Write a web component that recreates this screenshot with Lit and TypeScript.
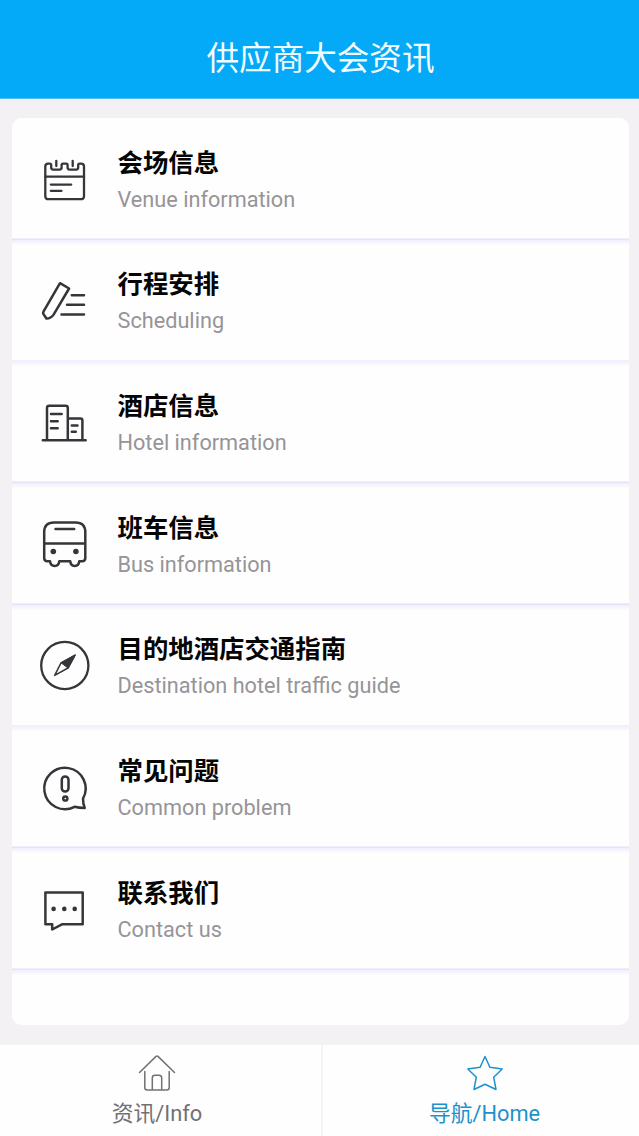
import { LitElement, html, css, svg } from "lit";
import { customElement } from "lit/decorators.js";

const icons = {
  venue: svg`<path d="M18.2 18.6Q15.3 18.6 15.3 21.5V51.2Q15.3 54.2 18.3 54.2H51Q54 54.2 54 51.2V21.5Q54 18.6 51 18.6H49.6Q48.2 18.6 48.2 20V22.6Q48.2 24.6 46.2 24.6H39.6Q37.6 24.6 37.6 22.6V20Q37.6 18.6 36.2 18.6H33Q31.6 18.6 31.6 20V22.6Q31.6 24.6 29.6 24.6H23.2Q21.2 24.6 21.2 22.6V20Q21.2 18.6 19.8 18.6Z" stroke-width="2.3"/><path d="M26.3 15.8V21M42.7 15.8V21M15.3 31.7H54M20.8 39.6H41.2M20.8 45.8H31.5" stroke-width="2.3"/>`,
  schedule: svg`<path d="M30 16.2L39.1 21.5L23.6 47.6Q20.8 51.6 16.4 51.5L13.2 46.6Q12.9 45.6 13.6 44.4Z"/><path d="M41.8 28.2H54M37 37.8H54M31.5 47.4H54"/>`,
  hotel: svg`<path d="M17 51V19Q17 16.8 19.2 16.8H35.6Q37.8 16.8 37.8 19V51M38 29.4H50.5Q52.4 29.4 52.4 31.4V51M12.8 51.3H55.7M21 25H31.7M21 32.2H27.7M21 39.2H27.7M41.8 36.5H47.5M41.8 42.8H45.8"/>`,
  bus: svg`<path d="M20 51.2H17.3Q14.2 51.2 14.2 48V22.2Q14.2 12.5 24 12.5H45.5Q55.3 12.5 55.3 22.2V48Q55.3 51.2 52.2 51.2H49.3Q48.8 56 44.7 56Q40.7 56 40.2 51.2H29.3Q28.8 56 24.7 56Q20.5 56 20 51.2M14.2 33.6H55.3M25.5 19.1H44.2"/><circle cx="23.3" cy="41.5" r="2.8" fill="#37353a" stroke="none"/><circle cx="45.9" cy="41.5" r="2.8" fill="#37353a" stroke="none"/>`,
  guide: svg`<circle cx="34.8" cy="33.5" r="23.6" stroke-width="2.3"/><path d="M45 23.1L31 30.8L24.7 43.4L38 36Z" stroke-width="1.5"/><path d="M45 23.1L31 30.8L38 36Z" fill="#37353a" stroke-width="1"/>`,
  problem: svg`<path d="M53 44.6A20.7 20.7 0 1 0 44.6 52.8Q49 54 54.7 54Q53 50 53 44.6Z"/><rect x="31.8" y="22.5" width="6.7" height="15" rx="3.3"/><circle cx="35.3" cy="44.5" r="2.1"/>`,
  contact: svg`<path d="M15.4 17.5H52.7V49.2H32.4L22.2 54.5V49.2H15.4Z"/><g fill="#37353a" stroke="none"><circle cx="23.6" cy="33.9" r="2.3"/><circle cx="34.3" cy="33.9" r="2.3"/><circle cx="44.7" cy="33.9" r="2.3"/></g>`,
};

const rows = [
  { icon: icons.venue, title: "会场信息", sub: "Venue information" },
  { icon: icons.schedule, title: "行程安排", sub: "Scheduling" },
  { icon: icons.hotel, title: "酒店信息", sub: "Hotel information" },
  { icon: icons.bus, title: "班车信息", sub: "Bus information" },
  { icon: icons.guide, title: "目的地酒店交通指南", sub: "Destination hotel traffic guide" },
  { icon: icons.problem, title: "常见问题", sub: "Common problem" },
  { icon: icons.contact, title: "联系我们", sub: "Contact us" },
];

@customElement("app-root")
export class AppRoot extends LitElement {
  static styles = css`
    :host { display: flex; flex-direction: column; height: 1136px; overflow: hidden; background: #f3f1f4; font-family: Roboto, "Noto Sans CJK SC", sans-serif; }
    * { box-sizing: border-box; }
    .header { height: 99px; flex: none; background: #04a9f7; color: #f3fdff; font-size: 32.6px; line-height: 48px; padding-top: 35px; padding-left: 2px; text-align: center; border-bottom: 1px solid #4fc1f5; }
    .list { margin: 19px 10px 20px 12px; height: 907px; flex: none; background: #fefefe; border-radius: 10px; overflow: hidden; }
    .row { height: 121.67px; padding-left: 18px; display: flex; align-items: flex-start; background: linear-gradient(#f1effd, #f7f6ff 3px, #fefefe 5px, #fefefe 120px, #e4e1f5 121px, #e8e5fa); }
    .row:first-child { background: linear-gradient(#fefefe, #fefefe 120px, #e4e1f5 121px, #e8e5fa); }
    .tail { height: 56px; background: linear-gradient(#f0eefd, #f7f6ff 3px, #fefefe 5px); }
    .icon { width: 70px; height: 70px; margin-top: 27.3px; flex: none; fill: none; stroke: #37353a; stroke-width: 2.5; stroke-linecap: round; stroke-linejoin: round; }
    .text { padding: 25.6px 0 0 17.5px; white-space: nowrap; }
    .title { font-size: 25.4px; line-height: 38px; font-weight: 700; color: #050505; }
    .sub { font-size: 21.7px; line-height: 35px; color: #969498; }
    .nav { flex: 1; display: flex; background: #fefefe; }
    .tab { display: flex; flex-direction: column; align-items: center; color: #727073; font-size: 21.8px; line-height: 32px; }
    .left { width: 323px; padding-right: 7px; border-right: 2px solid #f6f4f7; }
    .right { flex: 1; padding-left: 7px; color: #1d92ca; }
    .glyph { width: 40px; height: 40px; margin-top: 8px; margin-bottom: 5px; fill: none; stroke: currentColor; stroke-width: 1.5; stroke-linejoin: round; stroke-linecap: round; }
  `;

  render() {
    return html`
      <div class="header">供应商大会资讯</div>
      <div class="list">
        ${rows.map((r) => html`<div class="row">
          <svg class="icon" viewBox="0 0 70 70">${r.icon}</svg>
          <div class="text"><div class="title">${r.title}</div><div class="sub">${r.sub}</div></div>
        </div>`)}
        <div class="tail"></div>
      </div>
      <div class="nav">
        <div class="tab left">
          <svg class="glyph" viewBox="0 0 40 40"><path d="M2.5 19.5L19 3.4Q20 2.5 21 3.4L37.5 19.5M7.8 18.5V34.5Q7.8 37 10.3 37H29.7Q32.2 37 32.2 34.5V18.5M15.3 37V25Q15.3 22.3 18 22.3H22Q24.7 22.3 24.7 25V37"/></svg>
          <span>资讯/Info</span>
        </div>
        <div class="tab right">
          <svg class="glyph" viewBox="0 0 40 40"><path d="M20 3.5L24.9 14.3L37.2 16L28.7 24.2L31 36.5L20 31.2L9 36.5L11.3 24.2L2.8 16L15.1 14.3Z"/></svg>
          <span>导航/Home</span>
        </div>
      </div>`;
  }
}
